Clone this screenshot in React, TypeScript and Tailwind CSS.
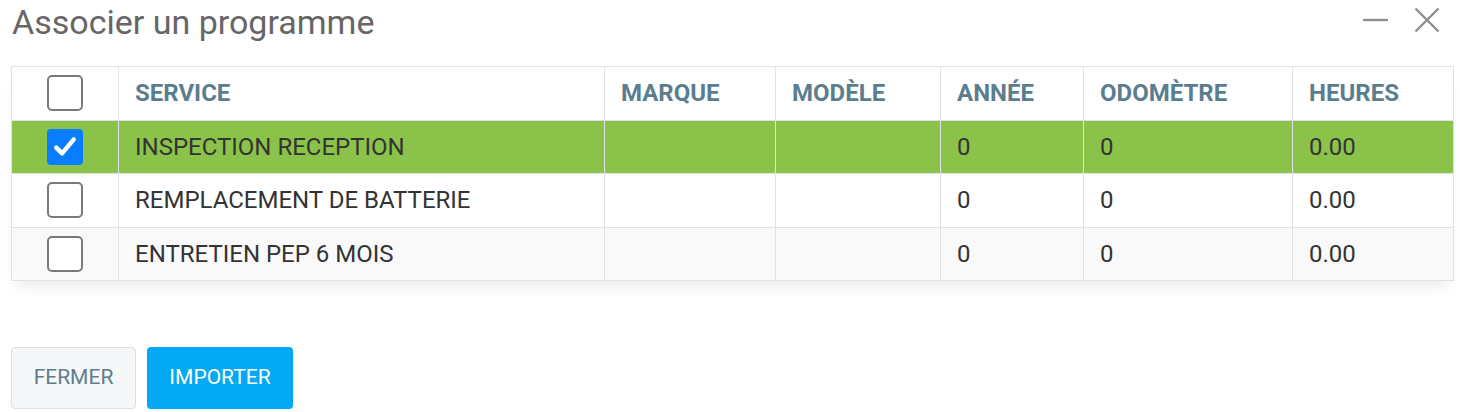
import React from 'react';

interface Row {
  service: string;
  marque: string;
  modele: string;
  annee: string;
  odometre: string;
  heures: string;
  checked: boolean;
}

const rows: Row[] = [
  { service: 'INSPECTION RECEPTION', marque: '', modele: '', annee: '0', odometre: '0', heures: '0.00', checked: true },
  { service: 'REMPLACEMENT DE BATTERIE', marque: '', modele: '', annee: '0', odometre: '0', heures: '0.00', checked: false },
  { service: 'ENTRETIEN PEP 6 MOIS', marque: '', modele: '', annee: '0', odometre: '0', heures: '0.00', checked: false },
];

const Check: React.FC<{ checked: boolean }> = ({ checked }) =>
  checked ? (
    <span className="inline-flex items-center justify-center w-[36px] h-[36px] rounded-[4px] bg-[#0a7cff] align-middle">
      <svg width="28" height="28" viewBox="0 0 24 24" fill="none">
        <path d="M4.5 12.5l5 5L19.5 5.5" stroke="#fff" strokeWidth="3.8" strokeLinecap="round" strokeLinejoin="round" />
      </svg>
    </span>
  ) : (
    <span className="inline-block w-[36px] h-[36px] rounded-[5px] border-2 border-[#7a7a7a] bg-white align-middle" />
  );

const App: React.FC = () => {
  const th = 'border border-[#dde3e8] text-left pl-[16px] font-bold text-[24px] text-[#5b7e8f]';
  const td = 'border border-[#dde3e8] text-left pl-[16px] text-[24px] text-[#333]';

  return (
    <div className="w-[1460px] h-[412px] bg-white relative font-['Roboto',sans-serif]">
      <div className="flex items-start justify-between h-[66px]">
        <h2 className="pl-[12px] pt-[2px] text-[34px] leading-[40px] text-[#666]">Associer un programme</h2>
        <div className="flex items-center gap-[26px] pr-[20px] pt-[7px]">
          <svg width="26" height="26" viewBox="0 0 26 26">
            <path d="M1 13h25" stroke="#8e8e8e" strokeWidth="2.4" />
          </svg>
          <svg width="26" height="26" viewBox="0 0 26 26">
            <path d="M1.5 1.5l23 23M24.5 1.5l-23 23" stroke="#8e8e8e" strokeWidth="2.4" />
          </svg>
        </div>
      </div>

      <div className="mx-[11px] w-[1442px] shadow-[0_10px_14px_-6px_rgba(0,0,0,0.1)]">
        <table className="w-full border-collapse table-fixed">
          <colgroup>
            <col className="w-[107px]" />
            <col className="w-[486px]" />
            <col className="w-[171px]" />
            <col className="w-[165px]" />
            <col className="w-[143px]" />
            <col className="w-[209px]" />
            <col className="w-[161px]" />
          </colgroup>
          <thead>
            <tr className="h-[53.5px] bg-white">
              <th className="border border-[#dde3e8] text-center">
                <Check checked={false} />
              </th>
              <th className={th}>SERVICE</th>
              <th className={th}>MARQUE</th>
              <th className={th}>MODÈLE</th>
              <th className={th}>ANNÉE</th>
              <th className={th}>ODOMÈTRE</th>
              <th className={th}>HEURES</th>
            </tr>
          </thead>
          <tbody>
            {rows.map((r, i) => (
              <tr
                key={r.service}
                className={`h-[53.5px] ${r.checked ? 'bg-[#8bc34a]' : i % 2 === 0 ? 'bg-[#f9f9f9]' : 'bg-white'}`}
              >
                <td className="border border-[#dde3e8] text-center">
                  <Check checked={r.checked} />
                </td>
                <td className={td}>{r.service}</td>
                <td className={td}>{r.marque}</td>
                <td className={td}>{r.modele}</td>
                <td className={td}>{r.annee}</td>
                <td className={td}>{r.odometre}</td>
                <td className={td}>{r.heures}</td>
              </tr>
            ))}
          </tbody>
        </table>
      </div>

      <div className="flex gap-[11px] pl-[11px] pt-[66px]">
        <button className="w-[125px] h-[62px] rounded-[4px] border border-[#dadfe3] bg-[#f5f7f9] text-[21px] text-[#607d8b]">
          FERMER
        </button>
        <button className="w-[146px] h-[62px] rounded-[4px] bg-[#03a9f4] text-[21px] text-white">
          IMPORTER
        </button>
      </div>
    </div>
  );
};

export default App;
